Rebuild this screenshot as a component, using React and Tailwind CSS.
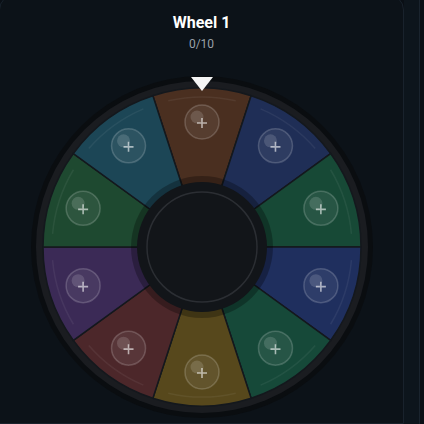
const segments = [
  '#4a2f20', // top brown
  '#1f2e56', // blue
  '#174936', // green
  '#1f2f5e', // blue
  '#164939', // green
  '#57481c', // yellow
  '#4c272a', // red
  '#3b2a56', // purple
  '#1e4930', // green
  '#1c4656', // teal
];

const pt = (r, deg) => {
  const a = (deg * Math.PI) / 180;
  return [r * Math.sin(a), -r * Math.cos(a)];
};

function arc(r, a0, a1) {
  const [x0, y0] = pt(r, a0);
  const [x1, y1] = pt(r, a1);
  return `M ${x0} ${y0} A ${r} ${r} 0 0 1 ${x1} ${y1}`;
}

function wedge(r, a0, a1) {
  const [x0, y0] = pt(r, a0);
  const [x1, y1] = pt(r, a1);
  return `M 0 0 L ${x0} ${y0} A ${r} ${r} 0 0 1 ${x1} ${y1} Z`;
}

function Wheel() {
  return (
    <svg width="344" height="344" viewBox="-172 -172 344 344" className="block">
      <circle r="171" fill="#0a0d10" />
      <circle r="166" fill="#1a1c20" />
      {segments.map((c, i) => {
        const a0 = -18 + 36 * i;
        const a1 = a0 + 36;
        return (
          <g key={i}>
            <path d={wedge(159, a0, a1)} fill={c} stroke="#14181d" strokeWidth="1.5" />
            <path d={arc(150, a0 + 5, a1 - 5)} fill="none" stroke="rgba(255,255,255,0.06)" strokeWidth="1.5" />
          </g>
        );
      })}
      {segments.map((c, i) => {
        const [x, y] = pt(125, 36 * i);
        return (
          <g key={'b' + i} transform={`translate(${x} ${y})`}>
            <circle r="17" fill="rgba(255,255,255,0.07)" stroke="rgba(255,255,255,0.18)" strokeWidth="1.5" />
            <circle cx="-5" cy="-5" r="6.5" fill="rgba(255,255,255,0.14)" />
            <path d="M -5 1 H 5 M 0 -4 V 6" stroke="rgba(255,255,255,0.6)" strokeWidth="1.6" />
          </g>
        );
      })}
      <circle r="71" fill="rgba(0,0,0,0.28)" />
      <circle r="65" fill="#121519" />
      <circle r="55" fill="none" stroke="#2b2e33" strokeWidth="1.5" />
      <polygon points="-11,-170 11,-170 0,-156" fill="#f5f5f5" />
    </svg>
  );
}

export default function App() {
  return (
    <div className="flex h-[424px] w-[424px] overflow-hidden bg-[#0a0f15]" style={{ fontFamily: 'Roboto, "Liberation Sans", sans-serif' }}>
      <div className="-ml-px -mt-[6px] w-[405px] shrink-0 rounded-t-2xl border border-[#19222c] bg-[#0c1218] pt-[16px]">
        <div className="flex flex-col items-center">
          <h1 className="text-base leading-6 font-bold text-white">Wheel 1</h1>
          <p className="mt-px text-xs leading-4 text-[#9aa1a9]">0/10</p>
        </div>
        <div className="mt-[23px] flex justify-center">
          <Wheel />
        </div>
      </div>
      <div className="w-[16px] shrink-0 border-r border-[#1a242e] bg-[#0d151c]" />
    </div>
  );
}
